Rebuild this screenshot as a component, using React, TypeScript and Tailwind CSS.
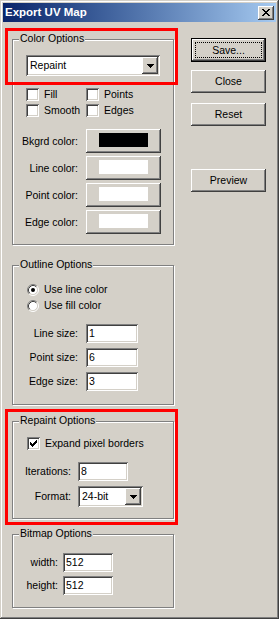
import React from 'react';

const raised =
  'shadow-[inset_-1px_-1px_0_#404040,inset_1px_1px_0_#ffffff,inset_-2px_-2px_0_#808080]';
const sunken =
  'shadow-[inset_1px_1px_0_#808080,inset_-1px_-1px_0_#ffffff,inset_2px_2px_0_#404040,inset_-2px_-2px_0_#d4d0c8]';

function Group({ label, className, children }: { label: string; className: string; children: React.ReactNode }) {
  return (
    <div
      className={`relative w-[162px] border border-[#808080] shadow-[inset_1px_1px_0_#ffffff,1px_1px_0_#ffffff] ${className}`}
    >
      <span className="absolute -top-[8px] left-[6px] bg-[#d4d0c8] px-[1px] leading-[13px]">{label}</span>
      {children}
    </div>
  );
}

function Combo({ value, width }: { value: string; width: string }) {
  return (
    <div className={`relative flex items-center h-[21px] bg-white ${sunken} ${width}`}>
      <span className="pl-[4px] leading-none">{value}</span>
      {/* drop-down arrow button */}
      <div
        className={`absolute right-[2px] top-[2px] w-[16px] h-[17px] bg-[#d4d0c8] ${raised} flex items-center justify-center`}
      >
        <svg width="7" height="4" viewBox="0 0 7 4" shapeRendering="crispEdges">
          <path d="M0 0h7v1h-1v1h-1v1h-1v1h-1v-1h-1v-1h-1v-1h-1z" fill="#000" />
        </svg>
      </div>
    </div>
  );
}

function Checkbox({ label, checked }: { label: string; checked?: boolean }) {
  return (
    <div className="flex items-center gap-[5px] h-[13px]">
      <div className={`w-[13px] h-[13px] bg-white ${sunken} flex items-center justify-center shrink-0`}>
        {checked && (
          <svg width="7" height="7" viewBox="0 0 7 7" shapeRendering="crispEdges">
            <path
              d="M0 2h1v1h1v1h1v-1h1v-1h1v-1h1v-1h1v3h-1v1h-1v1h-1v1h-1v1h-1v-1h-1v-1h-1v-1h-1z"
              fill="#000"
            />
          </svg>
        )}
      </div>
      <span className="leading-none whitespace-nowrap">{label}</span>
    </div>
  );
}

function Radio({ label, checked }: { label: string; checked?: boolean }) {
  return (
    <div className="flex items-center gap-[5px] h-[13px]">
      <svg width="12" height="12" viewBox="0 0 12 12" className="shrink-0">
        <circle cx="6" cy="6" r="4.5" fill="#fff" />
        <path d="M2.11 9.89A5.5 5.5 0 0 1 9.89 2.11" fill="none" stroke="#808080" />
        <path d="M9.89 2.11A5.5 5.5 0 0 1 2.11 9.89" fill="none" stroke="#ffffff" />
        <path d="M2.82 9.18A4.5 4.5 0 0 1 9.18 2.82" fill="none" stroke="#404040" />
        <path d="M9.18 2.82A4.5 4.5 0 0 1 2.82 9.18" fill="none" stroke="#d4d0c8" />
        {checked && <circle cx="6" cy="6" r="2" fill="#000" />}
      </svg>
      <span className="leading-none whitespace-nowrap">{label}</span>
    </div>
  );
}

function Field({ value, width }: { value: string; width: string }) {
  return (
    <div className={`flex items-center h-[19px] bg-white ${sunken} ${width}`}>
      <span className="pl-[3px] leading-none">{value}</span>
    </div>
  );
}

function Button({ label, isDefault, className }: { label: string; isDefault?: boolean; className: string }) {
  if (isDefault) {
    return (
      <div className={`relative w-[75px] h-[24px] border border-black bg-[#d4d0c8] ${raised} flex items-center justify-center ${className}`}>
        <span className="absolute inset-[3px] border border-dotted border-black" />
        <span className="leading-none">{label}</span>
      </div>
    );
  }
  return (
    <div className={`w-[75px] h-[23px] bg-[#d4d0c8] ${raised} flex items-center justify-center ${className}`}>
      <span className="leading-none">{label}</span>
    </div>
  );
}

function ColorRow({ label, color }: { label: string; color: string }) {
  return (
    <div className="flex items-center">
      <span className="w-[65px] text-right leading-none">{label}</span>
      <div className={`ml-[8px] w-[75px] h-[24px] bg-[#d4d0c8] ${raised} flex justify-center pt-[4px]`}>
        <div className={`w-[49px] h-[14px] ${color}`} />
      </div>
    </div>
  );
}

function SizeRow({ label, value }: { label: string; value: string }) {
  return (
    <div className="flex items-center">
      <span className="w-[65px] text-right leading-none">{label}</span>
      <div className="ml-[8px]">
        <Field value={value} width="w-[52px]" />
      </div>
    </div>
  );
}

export default function App() {
  return (
    <div className="relative w-[279px] h-[619px] overflow-hidden bg-[#d4d0c8] pt-[3px] px-[3px] font-['Liberation_Sans',Arial,sans-serif] text-[10.5px] text-black shadow-[inset_-1px_-1px_0_#404040,inset_1px_1px_0_#d4d0c8,inset_-2px_-2px_0_#808080,inset_2px_2px_0_#ffffff]">
      {/* Title bar */}
      <div className="flex items-center justify-between h-[19px] bg-gradient-to-r from-[#0a246a] to-[#a6caf0] pl-[2px] pr-[2px]">
        <span className="text-white font-bold text-[11.5px] leading-none">Export UV Map</span>
        <div className={`w-[16px] h-[14px] bg-[#d4d0c8] ${raised} flex items-center justify-center`}>
          <svg width="8" height="7" viewBox="0 0 8 7" shapeRendering="crispEdges">
            <path
              d="M0 0h2v1h1v1h2v-1h1v-1h2v1h-1v1h-1v1h-1v1h1v1h1v1h1v1h-2v-1h-1v-1h-2v1h-1v1h-2v-1h1v-1h1v-1h1v-1h-1v-1h-1v-1h-1z"
              fill="#000"
            />
          </svg>
        </div>
      </div>

      <div className="flex pl-[9px]">
        {/* Left column */}
        <div className="flex flex-col">
          <Group label="Color Options" className="mt-[17px] h-[206px]">
            <div className="ml-[13px] mt-[15px]">
              <Combo value="Repaint" width="w-[134px]" />
            </div>
            <div className="ml-[13px] mt-[12px] grid grid-cols-[60px_60px] gap-y-[3px]">
              <Checkbox label="Fill" />
              <Checkbox label="Points" />
              <Checkbox label="Smooth" />
              <Checkbox label="Edges" />
            </div>
            <div className="mt-[12px] flex flex-col gap-[3px]">
              <ColorRow label="Bkgrd color:" color="bg-black" />
              <ColorRow label="Line color:" color="bg-white" />
              <ColorRow label="Point color:" color="bg-white" />
              <ColorRow label="Edge color:" color="bg-white" />
            </div>
          </Group>

          <Group label="Outline Options" className="mt-[20px] h-[140px]">
            <div className="ml-[14px] mt-[17px] flex flex-col gap-[3px]">
              <Radio label="Use line color" checked />
              <Radio label="Use fill color" />
            </div>
            <div className="mt-[12px] flex flex-col gap-[5px]">
              <SizeRow label="Line size:" value="1" />
              <SizeRow label="Point size:" value="6" />
              <SizeRow label="Edge size:" value="3" />
            </div>
          </Group>

          <Group label="Repaint Options" className="mt-[16px] h-[98px]">
            <div className="ml-[14px] mt-[15px]">
              <Checkbox label="Expand pixel borders" checked />
            </div>
            <div className="mt-[12px] flex items-center">
              <span className="w-[58px] text-right leading-none">Iterations:</span>
              <div className="ml-[7px]">
                <Field value="8" width="w-[50px]" />
              </div>
            </div>
            <div className="mt-[5px] flex items-center">
              <span className="w-[58px] text-right leading-none">Format:</span>
              <div className="ml-[7px]">
                <Combo value="24-bit" width="w-[65px]" />
              </div>
            </div>
          </Group>

          <Group label="Bitmap Options" className="mt-[15px] h-[74px]">
            <div className="mt-[18px] flex items-center">
              <span className="w-[45px] text-right leading-none">width:</span>
              <div className="ml-[5px]">
                <Field value="512" width="w-[50px]" />
              </div>
            </div>
            <div className="mt-[4px] flex items-center">
              <span className="w-[45px] text-right leading-none">height:</span>
              <div className="ml-[5px]">
                <Field value="512" width="w-[50px]" />
              </div>
            </div>
          </Group>
        </div>

        {/* Right column */}
        <div className="ml-[17px] flex flex-col">
          <Button label="Save..." isDefault className="mt-[16px]" />
          <Button label="Close" className="mt-[8px]" />
          <Button label="Reset" className="mt-[10px]" />
          <Button label="Preview" className="mt-[43px]" />
        </div>
      </div>

      {/* red annotation boxes */}
      <div className="absolute left-[5px] top-[28px] w-[173px] h-[57px] border-[3px] border-[#ff0000]" />
      <div className="absolute left-[5px] top-[409px] w-[173px] h-[116px] border-[3px] border-[#ff0000]" />
    </div>
  );
}
